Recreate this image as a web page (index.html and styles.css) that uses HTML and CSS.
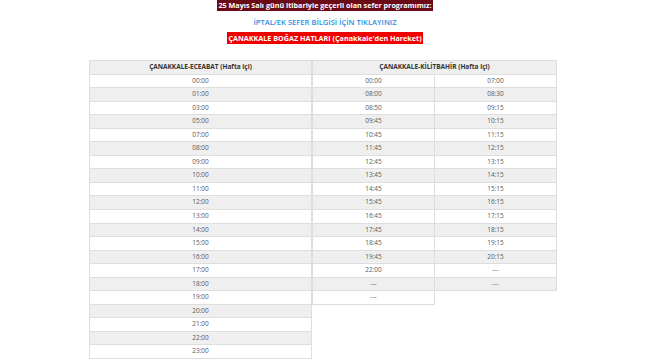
FILE: index.html
```html
<!DOCTYPE html>
<html lang="tr">
<head>
  <meta charset="UTF-8" />
  <title>Sefer Saatleri</title>
  <link rel="stylesheet" href="styles.css">
</head>
<body>
  <div class="notes">
    <p class="note"><span class="mark dark">25 Mayıs Salı günü itibariyle geçerli olan sefer programımız:</span></p>
    <p class="note"><a class="link" href="#">İPTAL/EK SEFER BİLGİSİ İÇİN TIKLAYINIZ</a></p>
    <p class="note"><span class="mark red">ÇANAKKALE BOĞAZ HATLARI (Çanakkale'den Hareket)</span></p>
  </div>

  <div class="schedule">
    <div class="table left">
      <div class="row head">ÇANAKKALE-ECEABAT (Hafta içi)</div>
      <div class="row">00:00</div>
      <div class="row">01:00</div>
      <div class="row">03:00</div>
      <div class="row">05:00</div>
      <div class="row">07:00</div>
      <div class="row">08:00</div>
      <div class="row">09:00</div>
      <div class="row">10:00</div>
      <div class="row">11:00</div>
      <div class="row">12:00</div>
      <div class="row">13:00</div>
      <div class="row">14:00</div>
      <div class="row">15:00</div>
      <div class="row">16:00</div>
      <div class="row">17:00</div>
      <div class="row">18:00</div>
      <div class="row">19:00</div>
      <div class="row">20:00</div>
      <div class="row">21:00</div>
      <div class="row">22:00</div>
      <div class="row">23:00</div>
    </div>

    <div class="table right">
      <div class="row head">ÇANAKKALE-KİLİTBAHİR (Hafta içi)</div>
      <div class="cols">
        <div class="col">
          <div class="row">00:00</div>
          <div class="row">08:00</div>
          <div class="row">08:50</div>
          <div class="row">09:45</div>
          <div class="row">10:45</div>
          <div class="row">11:45</div>
          <div class="row">12:45</div>
          <div class="row">13:45</div>
          <div class="row">14:45</div>
          <div class="row">15:45</div>
          <div class="row">16:45</div>
          <div class="row">17:45</div>
          <div class="row">18:45</div>
          <div class="row">19:45</div>
          <div class="row">22:00</div>
          <div class="row">---</div>
          <div class="row">---</div>
        </div>
        <div class="col">
          <div class="row">07:00</div>
          <div class="row">08:30</div>
          <div class="row">09:15</div>
          <div class="row">10:15</div>
          <div class="row">11:15</div>
          <div class="row">12:15</div>
          <div class="row">13:15</div>
          <div class="row">14:15</div>
          <div class="row">15:15</div>
          <div class="row">16:15</div>
          <div class="row">17:15</div>
          <div class="row">18:15</div>
          <div class="row">19:15</div>
          <div class="row">20:15</div>
          <div class="row">---</div>
          <div class="row">---</div>
        </div>
      </div>
    </div>
  </div>
</body>
</html>
```

FILE: styles.css
```css
body {
  margin: 0;
  font-family: 'Open Sans', sans-serif;
  background: #fff;
  color: #5a5a5a;
}
.notes {
  text-align: center;
}
.note {
  margin: 0;
  height: 11px;
  line-height: 11px;
  font-size: 7.2px;
  font-weight: bold;
}
.note + .note {
  margin-top: 5.5px;
}
.mark {
  color: #fff;
  padding: 1px 1px;
}
.dark {
  background: #6b0a17;
}
.red {
  background: #f20000;
}
.link {
  color: #1e8fe6;
  text-decoration: none;
  font-size: 7.6px;
  font-weight: 600;
}
.schedule {
  display: flex;
  align-items: flex-start;
  margin: 16px 0 0 89px;
}
.table {
  border-top: 1px solid #dedede;
  border-left: 1px solid #dedede;
}
.left {
  width: 222px;
}
.right {
  width: 244px;
}
.cols {
  display: flex;
  align-items: flex-start;
}
.col {
  width: 122px;
}
.row {
  box-sizing: border-box;
  height: 13.55px;
  line-height: 12.5px;
  border-right: 1px solid #dedede;
  border-bottom: 1px solid #dedede;
  text-align: center;
  font-size: 6.5px;
  background: #fff;
}
.row:nth-child(odd) {
  background: #efefef;
}
.col .row:nth-child(odd) {
  background: #fff;
}
.col .row:nth-child(even) {
  background: #efefef;
}
.head {
  font-weight: bold;
  color: #333;
  background: #efefef;
}
```
